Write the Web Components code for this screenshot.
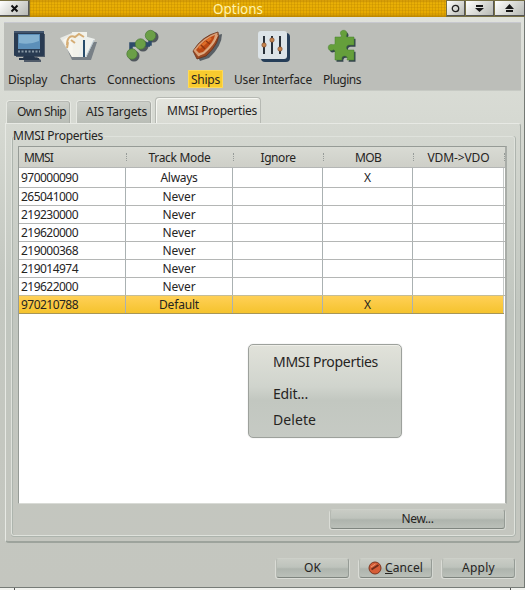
<!DOCTYPE html>
<html lang="en"><head><meta charset="utf-8"><title>Options</title>
<style>html,body{margin:0;width:525px;height:590px;overflow:hidden}body{font:12px/18px "Noto Sans","Open Sans",sans-serif;color:#26241f}</style>
</head><body><options-window></options-window>
<script>
const define=(name,html,after)=>customElements.define(name,class extends HTMLElement{
  connectedCallback(){if(this.shadowRoot)return;const r=this.attachShadow({mode:'open'});r.innerHTML=html;if(after)after.call(this,r)}
});

// Text set to a given advance width by letter spacing
define('fit-text',`<style>:host{display:inline-block;white-space:pre;flex:none;overflow:visible}span{display:inline-block}::slotted(u){text-underline-offset:1px}</style><span><slot></slot></span>`,function(r){
  const s=r.querySelector('span'),w=+this.getAttribute('w'),n=this.textContent.length;
  this.style.width=w+'px';s.style.letterSpacing=(w-s.getBoundingClientRect().width)/n+'px';
});

define('title-bar',`<style>
:host{display:flex;height:17px;gap:1px;background:#777044;box-sizing:border-box}
.b{flex:none;height:15px;margin-top:1px;background:linear-gradient(135deg,#fff,#dedfdb 45%,#b7b9b4);border-right:1px solid #555;border-bottom:1px solid #555;box-sizing:border-box;display:flex;align-items:center;justify-content:center}
.t{flex:1;display:flex;justify-content:center;align-items:flex-start;font-size:13.5px;line-height:19px;color:#fff3ae;background:repeating-linear-gradient(90deg,#b9820055 0 1px,transparent 1px 3px),repeating-linear-gradient(0deg,#c28b0055 0 1px,transparent 1px 3px),linear-gradient(#d49b08,#e9b006 20%,#e6a900 80%,#b88400);}
svg{display:block}</style>
<div class="b" style="width:29px"><svg width="9" height="9"><path d="M1.5 1.5l6 6m0-6l-6 6" stroke="#111" stroke-width="2"/></svg></div>
<div class="t"><fit-text w="50">Options</fit-text></div>
<div class="b" style="width:18px"><svg width="9" height="9"><circle cx="4.5" cy="4.5" r="3.2" fill="none" stroke="#222" stroke-width="1.3"/></svg></div>
<div class="b" style="width:28px"><svg width="9" height="9"><path d="M1 1h7v2h-7zM0 4h9l-4.500 4z" fill="#151515"/></svg></div>
<div class="b" style="width:30px"><svg width="9" height="9"><path d="M0 5h9l-4.500-5zM1 6h7v2h-7z" fill="#151515"/></svg></div>`);

const piece='M8 7h6q1-1-.5-3c-1-5 7-5 6.500 0-1 2-1 3 0 3h7v8h-4c-4-1-5 5-1 5h5v10h-7c1-2 0-4-2.500-4s-3 2-2.500 4H8v-9q-1-2-3-.5c-5 1-5-7 0-6q2 1 3-1z';
const icons={
display:`<path d="M3 4h29v23h-8l4 3v2h-17v-2l3-3h-11z" fill="#16263e" opacity=".65"/><rect x="1" y="1" width="30" height="25" rx="1" fill="#293b52"/><path d="M1 1h30v2h-30z" fill="#42556d"/><rect x="5" y="4" width="22" height="15" fill="#5c8fb9"/><path d="M6 5h20v6q-9 4-20 2z" fill="#84b1d0"/><path d="M5 21.500h22" stroke="#8797a3" stroke-width="2" stroke-dasharray="2 1.500"/><path d="M11 26h10l1 2h4v2h-20v-2h4z" fill="#26364b"/>`,
charts:`<path d="M4 12l8 18h19l6-18z" fill="#334253" opacity=".5"/><path d="M0 8l12-5 8 22-8 2z" fill="#e9eae5"/><path d="M3 10l13-8 8 24-12 1z" fill="#f7f6ef"/><path d="M12 2h15v25h-14z" fill="#f2f2eb"/><path d="M24 6l11 3-9 18h-8z" fill="#edf0ed"/><path d="M7 15c0-8 4-10 8-8l4-3 5 3M11 10l4 3M8 12l-1 6" fill="none" stroke="#d5ad75" stroke-width="2"/><path d="M24 10v17" stroke="#274c6b" stroke-width="2"/><path d="M26 27l8-17" stroke="#b8c7cf"/>`,
connections:`<g transform="translate(2 2)" fill="#17212d" opacity=".65"><circle cx="6" cy="24" r="5.500"/><circle cx="15" cy="14" r="5.500"/><circle cx="25" cy="5" r="5.500"/></g><path d="M5 20v-6h19v-6M5 15h5M18 15h6" fill="none" stroke="#2d4b69" stroke-width="3.500"/><g fill="#6b9f47" stroke="#4b7a36" stroke-width=".7"><circle cx="6" cy="24" r="5.200"/><circle cx="14.500" cy="14" r="5.200"/><circle cx="24.500" cy="5.500" r="5.200"/></g>`,
ships:`<path d="M5 23Q14 7 31 4Q31 16 18 28l-9 3z" fill="#222d37" opacity=".65"/><path d="M2 21Q11 6 27 2Q30 12 15 26L6 29z" fill="#9c4a23" stroke="#653019" stroke-width=".8"/><path d="M2.500 20.500Q12 7 26.500 2.500Q27 12 13 24l-6 2z" fill="#d9a077"/><path d="M5 20Q13 9 24 5Q23 12 12 22l-4 1z" fill="#bd4813"/><path d="M8 18L20 8" stroke="#de6d28" stroke-width="2.500"/><path d="M10 15l4 4M15 11l4 3" stroke="#8e3511" stroke-width="1.500"/><path d="M7 26q12-5 20-21" fill="none" stroke="#e0b38d" stroke-width=".8"/>`,
interface:`<rect x="3" y="3" width="29" height="29" rx="4" fill="#263e58"/><rect x="0" y="1" width="29" height="28" rx="3" fill="#dce4e8"/><path d="M6 6v18M14 6v18M22 6v18" stroke="#28313a" stroke-width="2"/><g fill="#c7854d" stroke="#713e21" stroke-width=".6"><circle cx="6" cy="15" r="2.200"/><circle cx="14" cy="10" r="2.200"/><circle cx="22" cy="19" r="2.200"/></g>`,
plugins:`<path transform="translate(1.500 1.800)" d="${piece}" fill="#1c3039" opacity=".85"/><path d="${piece}" fill="#659f3b" stroke="#47802f" stroke-width=".5"/>`};

define('tool-item',`<style>:host{display:flex;flex-direction:column;align-items:center;flex:none}svg{height:33px;display:block;overflow:visible}.l{height:18px;margin-top:7px;padding:0 3px;line-height:19px;border-radius:1px}:host([active]) .l{background:#f8cb2f;box-shadow:inset 0 0 0 1px #ffda55}</style><svg></svg><div class="l"><fit-text></fit-text></div>`,function(r){
  const g=r.querySelector('svg'),t=this.getAttribute('icon');g.setAttribute('width',t==='charts'?36:30);g.innerHTML=icons[t];
  const f=document.createElement('fit-text');f.setAttribute('w',this.getAttribute('w'));f.textContent=this.getAttribute('label');r.querySelector('fit-text').replaceWith(f);
});

define('tool-bar',`<style>:host{display:flex;height:69px;margin:5px 4px 0;background:#bcbeb9;box-sizing:border-box;padding:7px 0 0 1px;gap:5px;border-top:1px solid #c7c8cf;border-bottom:1px solid #c7cac4}</style>
<tool-item icon="display" label="Display" w="39"></tool-item><tool-item style="margin-left:2px" icon="charts" label="Charts" w="36"></tool-item><tool-item icon="connections" label="Connections" w="68"></tool-item><tool-item style="margin-left:5px" icon="ships" label="Ships" w="29" active></tool-item><tool-item style="margin-left:3px" icon="interface" label="User Interface" w="78"></tool-item><tool-item icon="plugins" label="Plugins" w="38"></tool-item>`);

define('page-tab',`<style>:host{display:flex;box-sizing:border-box;height:23px;align-items:center;border:1px solid #e6e8e2;border-bottom:0;border-radius:4px 4px 0 0;background:linear-gradient(#cdd0ca,#b9bdb6);box-shadow:inset -1px 0 #a8aba5,inset 0 1px #b8bab5}
:host([active]){height:26px;background:linear-gradient(#e5e6df,#d8dad3);border-color:#b6b9b3;box-shadow:inset 1px 1px #f6f7f2}</style><slot></slot>`);

define('mmsi-table',`<style>
:host{display:flex;flex-direction:column;box-sizing:border-box;width:489px;height:358px;border:1px solid #969b96;border-bottom-color:#d9dbd6;border-right:2px solid #a9ada8;background:#fff}
.r{display:grid;grid-template-columns:107px 107px 90px 90px 91px;height:17px;border-bottom:1px solid #b4b6b5}
.r>div{border-right:1px solid #aab1b2;display:flex;justify-content:center;align-items:center;line-height:17px}
.r>div:first-child{justify-content:flex-start;padding-left:2px}.r>div:last-child{border-color:#c5c9c8}
.first{height:18px;padding-top:1px}.first>div{margin-top:-1px}
.r.h{height:20px;width:486px;background:linear-gradient(#d9dbd4,#cecfc8)}
.h>div{border:0;position:relative}.h>div:first-child{padding-left:5px}.h>div:after{content:"";position:absolute;right:-1px;top:6px;height:8px;border-right:1px dotted #969b98}
.sel{width:485px;background:linear-gradient(#ffd057,#f5c32d);border-bottom-color:#a79658;box-shadow:0 -1px #c5bd97}
</style><div class="r h"><div><fit-text w="29">MMSI</fit-text></div><div><fit-text w="62">Track Mode</fit-text></div><div><fit-text w="35">Ignore</fit-text></div><div><fit-text w="26">MOB</fit-text></div><div><fit-text w="62">VDM-&gt;VDO</fit-text></div></div>`,function(r){
 [['970000090','Always',37,1],['265041000','Never',33],['219230000','Never',33],['219620000','Never',33],['219000368','Never',33],['219014974','Never',33],['219622000','Never',33],['970210788','Default',40,1]].forEach((d,i)=>{
  const e=document.createElement('div');e.className='r'+(i===0?' first':i===7?' sel':'');
  e.innerHTML=`<div><fit-text w="57">${d[0]}</fit-text></div><div><fit-text w="${d[2]}">${d[1]}</fit-text></div><div></div><div>${d[3]?'<fit-text w="7">X</fit-text>':''}</div><div></div>`;r.append(e);
 });
});

define('push-button',`<style>:host{display:flex;box-sizing:border-box;height:20px;justify-content:center;align-items:center;gap:3px;background:linear-gradient(#c9ccc5,#bec3bc 45%,#aeb4ad 55%,#bbc0b9);border:1px solid #b5b9b2;border-top-color:#cdd0c9;border-right-color:#959b95;border-bottom-color:#7f857f;border-radius:3px;box-shadow:-1px 1px #dadcd6,1px 1px #d4d7d1}</style><slot></slot>`);

define('context-menu',`<style>:host{position:absolute;left:248px;top:344px;width:154px;height:94px;box-sizing:border-box;border:1px solid #9da19c;border-radius:5px;background:linear-gradient(#e1e2da,#d0d4cd 45%,#c2c7c0 60%,#c6cac4);padding:4px 0 0 24px;display:flex;flex-direction:column;font-size:14px;line-height:26px;box-shadow:inset 0 1px #eeeee8,0 0 1px #bbb}.t{margin-bottom:6px;height:26px}.i{height:26px}</style><div class="t"><fit-text w="105">MMSI Properties</fit-text></div><div class="i"><fit-text w="35">Edit...</fit-text></div><div class="i"><fit-text w="43">Delete</fit-text></div>`);

define('options-window',`<style>
:host{display:flex;flex-direction:column;position:relative;width:525px;height:590px;box-sizing:border-box;background:linear-gradient(#dfe1db 18px,#d6d9d2 120px,#c4c8c1 270px,#c4c6bf)}
:host:after{content:"";position:absolute;right:0;top:17px;bottom:2px;border-right:1px solid #747974}
.tabs{display:flex;align-items:flex-end;height:26px;margin:6px 0 0 6px}
.panel{box-sizing:border-box;margin:0 4px 0 5px;height:420px;border:1px solid #e7e9e4;border-right-color:#a4aaa4;border-bottom:2px solid #9da39c;border-radius:0 3px 4px 4px;padding:3px 5px;background:linear-gradient(#d5d8d1,#c1c6bf 45%,#c4c6bf)}
fieldset{box-sizing:border-box;margin:0;padding:1px 0 0 6px;border:1px solid #dfe2dc;box-shadow:inset 1px 0 #adb4ad,1px 0 #aeb4ae,0 1px #adb4ad;border-radius:3px;height:409px;min-width:0}
legend{padding:0 1px;height:18px;line-height:18px;margin-left:-6px}
.new{width:175px;margin:5px 0 0 312px}
.acts{display:flex;gap:10px;margin:15px 9px 0 276px}.acts push-button{width:73px;height:20px}
.foot{margin-top:auto;height:3px;background:#f2f3ef;border-top:1px solid #777c77;box-sizing:border-box;display:flex;justify-content:space-between;padding:0 14px}
.foot i{width:1px;height:2px;background:#555}
</style><title-bar></title-bar><tool-bar></tool-bar>
<div class="tabs"><page-tab style="width:65px;padding-left:10px"><fit-text w="49">Own Ship</fit-text></page-tab><page-tab style="width:76px;margin-left:5px;padding-left:9px"><fit-text w="61">AIS Targets</fit-text></page-tab><page-tab active style="width:106px;margin-left:3px;padding-left:11px"><fit-text w="90">MMSI Properties</fit-text></page-tab></div>
<div class="panel"><fieldset><legend><fit-text w="90">MMSI Properties</fit-text></legend><mmsi-table></mmsi-table><push-button class="new"><fit-text w="32">New...</fit-text></push-button></fieldset></div>
<div class="acts"><push-button><fit-text w="17">OK</fit-text></push-button><push-button><svg width="14" height="14"><circle cx="7" cy="7" r="6" fill="#d65d37" stroke="#7d351f"/><path d="M3.500 8.500l7-4.500" stroke="#722d1b" stroke-width="2"/><path d="M3 6l4.500-3" stroke="#ee9b76"/></svg><fit-text w="38"><u>C</u>ancel</fit-text></push-button><push-button><fit-text w="33">Apply</fit-text></push-button></div>
<div class="foot"><i></i><i></i></div><context-menu></context-menu>`);
</script></body></html>
